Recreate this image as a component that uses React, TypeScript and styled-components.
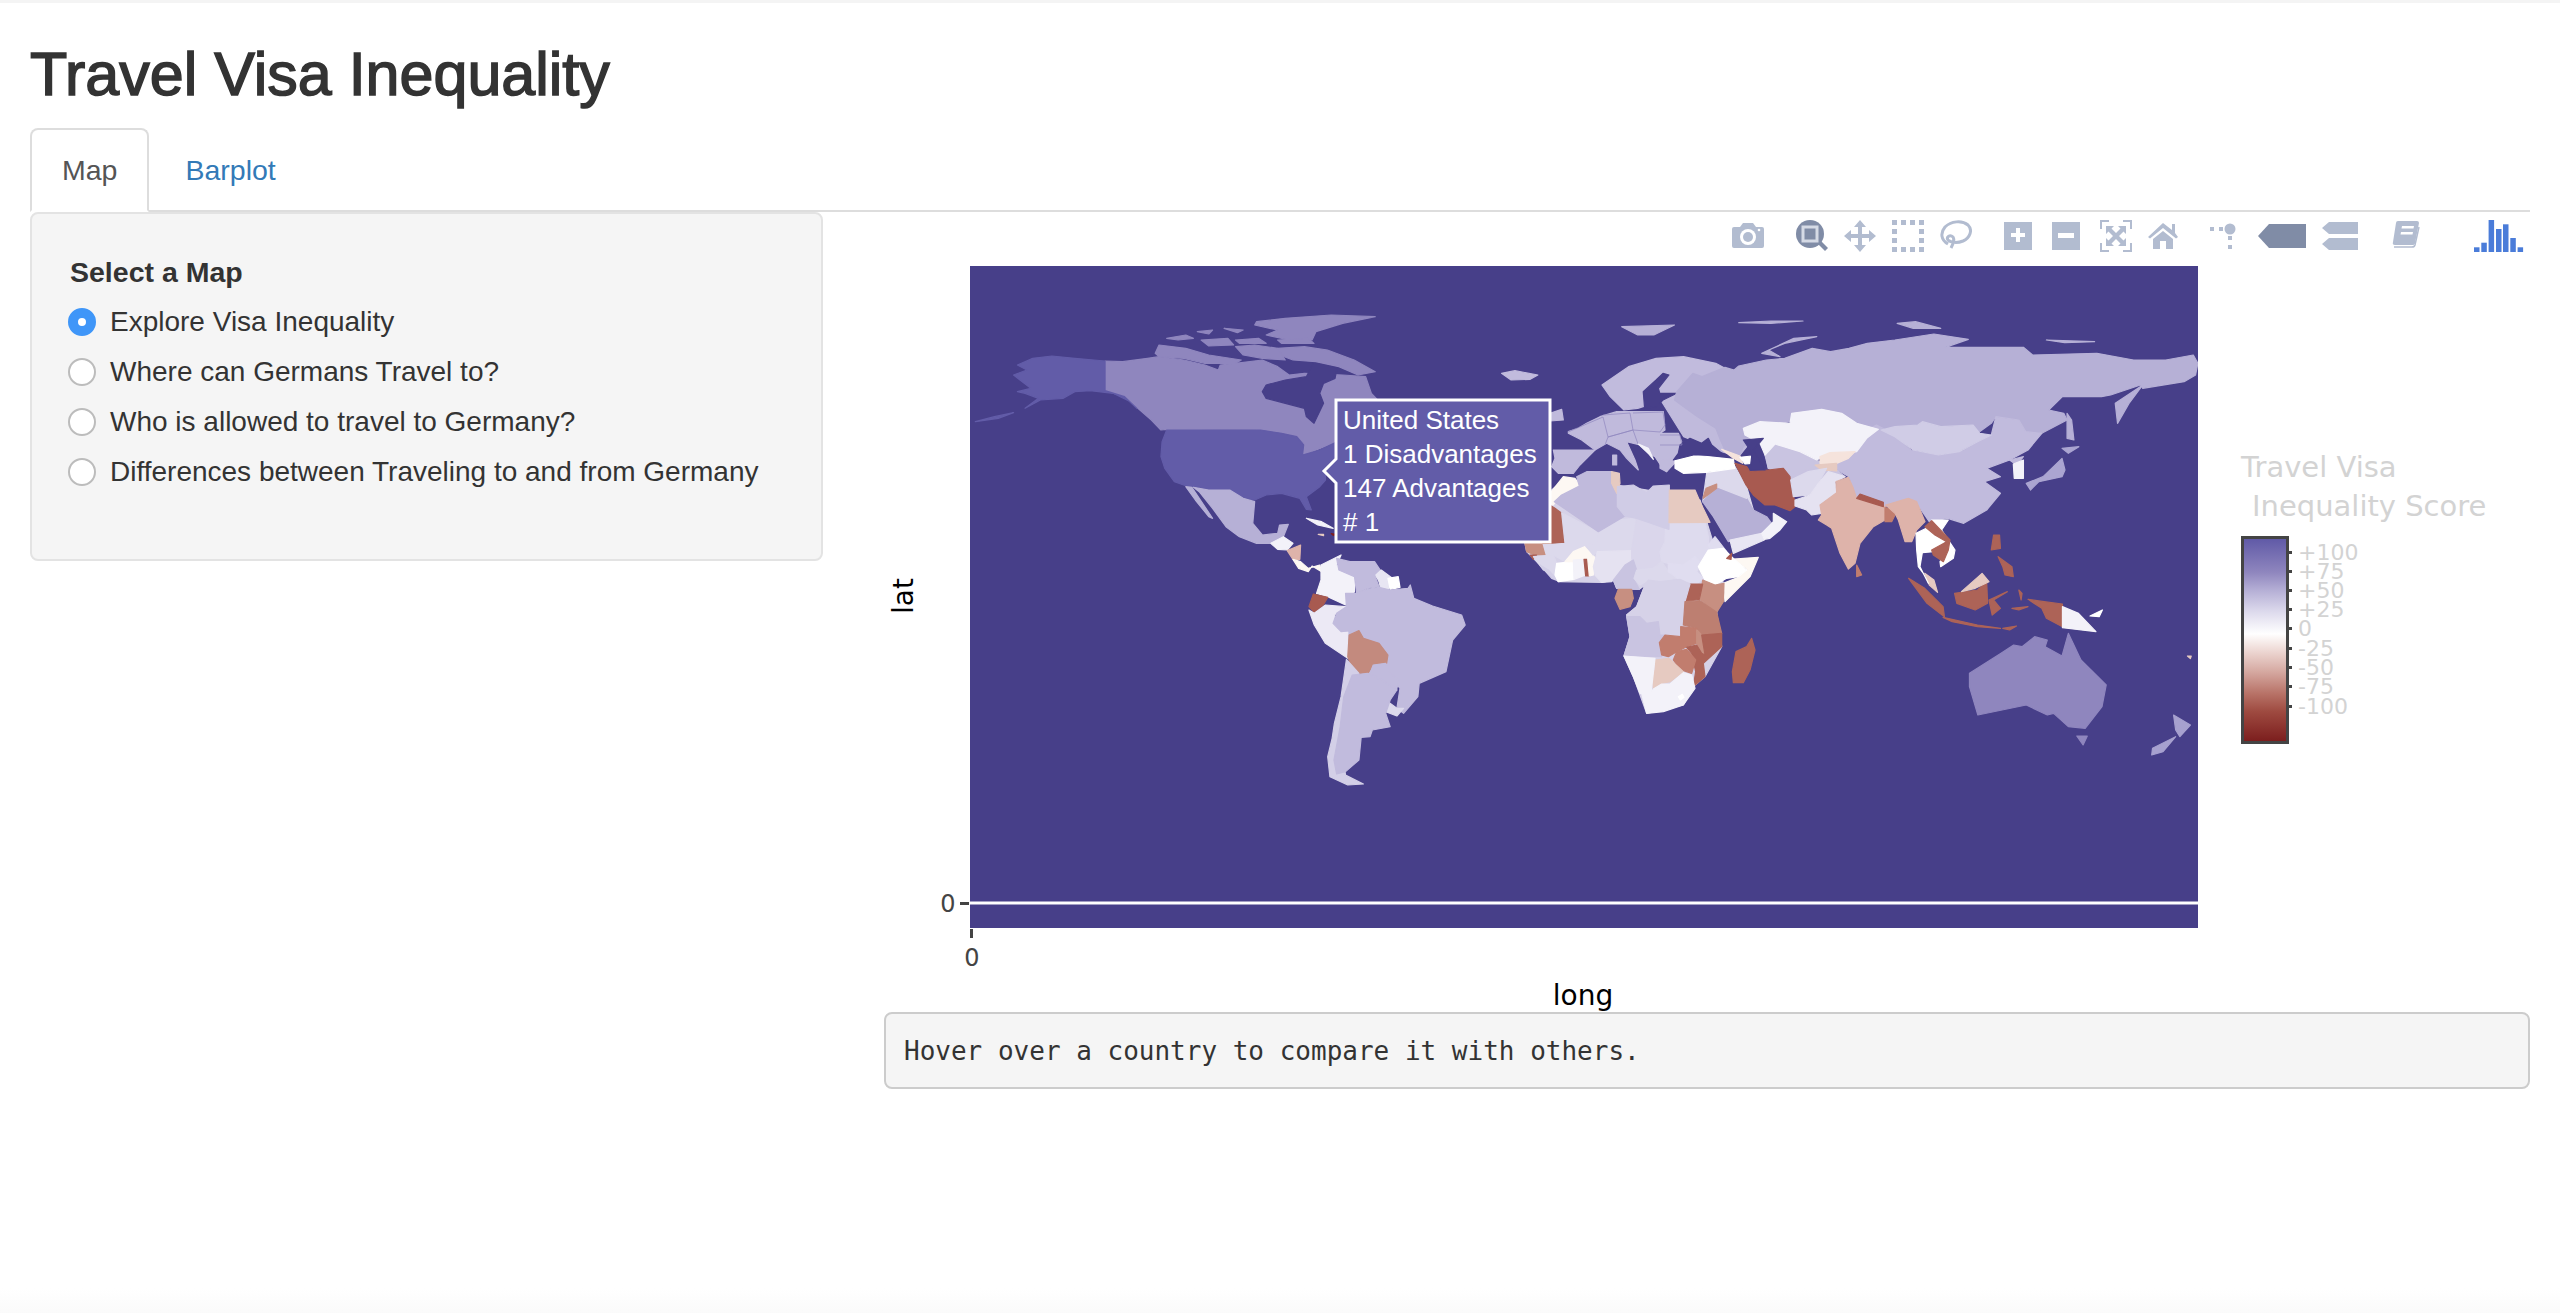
import React from 'react';
import styled, { createGlobalStyle } from 'styled-components';

const GlobalStyle = createGlobalStyle`
  html, body {
    margin: 0;
    padding: 0;
    background: #fff;
  }
  body {
    min-height: 1316px;
    font-family: "Liberation Sans", Arial, sans-serif;
    color: #333;
    overflow: hidden;
  }
`;

const Page = styled.div`
  border-top: 3px solid #f4f4f4;
  height: 1313px;
  box-sizing: border-box;
  padding: 0 30px;
  background: linear-gradient(to bottom, #fff 1285px, #fafafa 1313px);
`;

const Title = styled.h1`
  margin: 0;
  padding-top: 36px;
  height: 89px;
  box-sizing: content-box;
  font-size: 61px;
  line-height: 71px;
  font-weight: 400;
  -webkit-text-stroke: 1.5px #333;
`;

const TabBar = styled.div`
  display: flex;
  height: 84px;
  box-sizing: border-box;
  border-bottom: 2px solid #ddd;
`;

const Tab = styled.div<{ $active?: boolean }>`
  height: 84px;
  box-sizing: border-box;
  padding: 0 30px;
  margin-right: 4px;
  font-size: 28.5px;
  line-height: 80px;
  border: 2px solid ${p => (p.$active ? '#ddd' : 'transparent')};
  border-bottom-color: ${p => (p.$active ? '#fff' : 'transparent')};
  border-radius: 8px 8px 0 0;
  background: ${p => (p.$active ? '#fff' : 'transparent')};
  color: ${p => (p.$active ? '#555' : '#337ab7')};
`;

const Layout = styled.div`
  display: grid;
  grid-template-columns: 793px 1648px;
  column-gap: 59px;
  align-items: start;
`;

const Well = styled.div`
  height: 349px;
  box-sizing: border-box;
  padding: 41px 38px 0;
  background: #f5f5f5;
  border: 2px solid #e3e3e3;
  border-radius: 8px;
`;

const GroupLabel = styled.div`
  font-size: 28.5px;
  font-weight: 700;
  line-height: 34px;
  margin-bottom: 8px;
`;

const RadioRow = styled.div`
  display: flex;
  align-items: center;
  height: 50px;
  font-size: 28px;
  gap: 14px;
  margin-left: -2px;
`;

const RadioDot = styled.span<{ $checked?: boolean }>`
  width: 28px;
  height: 28px;
  box-sizing: border-box;
  border-radius: 50%;
  flex: none;
  background: #fff;
  border: ${p => (p.$checked ? '10px solid #3f96f8' : '2px solid #bcbcbc')};
`;

const MainColumn = styled.div`
  display: flex;
  flex-direction: column;
`;

const PlotFrame = styled.div`
  position: relative;
  height: 800px;
`;

const PlotSvg = styled.svg`
  display: block;
`;

const ModeBar = styled.div`
  position: absolute;
  top: 8px;
  left: 850px;
  display: flex;
  align-items: flex-start;
`;

const ModeIcon = styled.svg<{ $gap: number }>`
  display: block;
  flex: none;
  margin-left: ${p => p.$gap}px;
  fill: #b2bcd0;
`;

const MapShape = styled.polygon`
  stroke-width: 1.2px;
  stroke-linejoin: round;
  vector-effect: non-scaling-stroke;
`;

const SvgLabel = styled.text<{ $size: number; $color: string }>`
  font-family: "DejaVu Sans", Verdana, sans-serif;
  font-size: ${p => p.$size}px;
  fill: ${p => p.$color};
`;

const TipLine = styled.text`
  font-family: "Liberation Sans", Arial, sans-serif;
  font-size: 26px;
  fill: #fff;
`;

const OutputPre = styled.pre`
  margin: 0 0 0 2px;
  height: 77px;
  box-sizing: border-box;
  padding: 0 18px;
  background: #f5f5f5;
  border: 2px solid #ccc;
  border-radius: 8px;
  font-family: "DejaVu Sans Mono", monospace;
  font-size: 26px;
  line-height: 75px;
  color: #333;
`;

const SEA = '#473f89';
const USA = '#625ca8';
const CAN = '#8f86be';
const RUS = '#b6b0d6';
const CHN = '#c1bbdd';
const EUR = '#c0badc';
const AF1 = '#dcd9ec';
const AF2 = '#d3cfe7';
const PALE = '#f3f2f9';
const WH = '#ffffff';
const CREAM = '#fdf8f3';
const BRK = '#a85a50';
const BR2 = '#ad6357';
const BR3 = '#c17d6e';
const BR4 = '#c78f81';
const PK1 = '#deb3aa';
const PK2 = '#e6cac1';
const PK3 = '#f5e3dc';

type Shape = [string, string];

// shapes are traced in crop coordinates, each group maps its crop back on the page
const NORTH_AMERICA: Shape[] = [
  [CAN, '379,303 425,305 490,295 520,290 585,300 640,315 675,330 680,315 720,310 790,300 830,320 860,345 900,340 1000,345 1060,350 1075,400 1100,430 1100,500 985,545 920,575 895,585 898,550 880,530 840,520 785,510 540,508 525,510 500,480 470,450 430,410 379,392'],
  [SEA, '790,395 800,375 850,360 905,350 925,305 960,310 985,325 980,355 950,370 940,400 950,430 925,490 905,470 900,445 850,430 800,415'],
  [CAN, '775,185 850,175 970,165 1085,170 1000,190 930,215 920,240 860,240 800,225 830,210 770,195'],
  [CAN, '830,265 900,260 960,270 1030,300 1085,335 1040,345 990,320 930,305 870,300 835,285'],
  [CAN, '510,280 520,255 590,265 650,285 735,300 720,310 640,310 585,295 520,290'],
  [CAN, '720,260 770,255 830,265 850,300 790,295 740,285'],
  [CAN, '540,235 590,225 610,235 570,240'],
  [CAN, '620,215 660,210 650,222'],
  [CAN, '690,205 740,210 725,218'],
  [CAN, '630,240 700,235 715,255 650,258'],
  [CAN, '720,240 780,235 800,250 730,250'],
  [CAN, '830,240 910,235 925,250 840,250'],
  [USA, '379,303 379,392 430,410 462,445 440,422 400,400 340,392 300,395 270,415 210,420 170,445 205,415 170,400 150,395 185,385 140,345 175,330 150,315 190,295 240,288 300,295'],
  [USA, '40,485 90,470 140,458 100,475'],
  [USA, '540,510 785,510 840,520 880,530 898,555 895,585 940,570 985,545 985,590 975,615 955,630 955,660 940,680 905,710 918,750 905,748 888,715 840,700 800,705 770,720 740,715 705,690 650,690 592,678 560,665 535,625 525,590 528,545'],
  [RUS, '590,680 606,682 660,775 650,770 615,720'],
  [RUS, '610,682 650,690 705,690 740,715 770,725 765,790 790,825 830,820 835,795 858,793 845,830 810,850 775,850 730,830 695,800 660,745 625,695'],
  [PALE, '812,850 845,830 870,850 855,870 830,868'],
  [PK1, '855,872 890,855 888,898 870,898'],
  [CREAM, '870,898 890,905 910,925 940,915 945,935 920,918 910,935 885,925'],
  [PALE, '905,775 945,785 975,805 935,795'],
  [PK2, '936,823 950,823 950,827'],
  ['#7e1e20', '970,821 982,823 975,826'],
  [CHN, '1415,340 1450,332 1510,345 1490,358 1440,360'],
];

const SOUTH_AMERICA: Shape[] = [
  [CHN, '530,330 640,400 665,570 600,530 555,470'],
  [PALE, '495,195 540,165 530,195 570,230 570,275 550,315 510,290 485,280 495,240'],
  [CHN, '530,175 560,185 615,185 630,215 618,235 625,260 600,265 575,280 570,230 535,210'],
  ['#e8e6f3', '618,225 630,210 655,235 645,275 630,272 625,245'],
  [WH, '645,235 668,230 672,262 650,268'],
  [BRK, '478,282 510,292 500,315 480,337 468,320'],
  ['#ece9f5', '468,330 480,340 505,315 550,320 525,345 525,375 555,395 555,475 505,430 480,375'],
  [CHN, '550,280 575,280 600,268 625,262 650,270 690,265 695,255 703,295 745,318 810,345 818,375 790,420 775,515 715,550 712,590 680,640 665,625 672,565 645,520 640,490 645,465 625,430 590,415 580,390 540,395 522,370 530,340 552,320'],
  ['#c38a7e', '580,392 590,415 625,430 645,465 642,490 612,495 600,520 570,522 555,470 558,405'],
  [CHN, '612,495 640,490 650,520 670,540 665,565 640,545 605,520'],
  ['#dcd9ec', '645,605 665,625 680,625 665,648 640,635'],
  ['#d3cfe7', '552,478 580,520 565,590 560,680 545,780 550,825 590,852 555,855 515,830 510,770 520,715 525,670 540,590'],
  [CHN, '565,525 600,520 640,550 665,570 650,600 640,640 650,680 610,690 605,710 585,712 580,780 550,815 530,822 524,780 538,680 546,590'],
];

const AFRICA: Shape[] = [
  ['#d6d2e8', '15,130 60,0 130,-60 200,-60 440,-20 540,0 585,145 610,250 590,337 605,440 555,530 520,560 490,615 380,640 340,530 312,468 330,410 320,345 350,320 375,255 358,268 290,265 280,240 245,247 115,245 55,190 20,155'],
  [BR2, '65,0 105,25 140,50 125,48 135,130 60,130'],
  [AF1, '125,38 232,95 235,130 195,140 160,155 135,185 100,165 70,165 68,135 135,130'],
  [BR4, '15,130 65,130 75,165 45,165 20,155'],
  [BRK, '30,165 50,165 40,178'],
  [AF1, '40,170 100,165 110,190 105,225 85,215 70,210 55,190'],
  [AF2, '60,195 85,210 115,243 95,235'],
  [WH, '110,190 160,185 162,238 115,245 105,225'],
  [CREAM, '135,185 160,155 195,140 218,165 192,180 160,185'],
  [PALE, '160,180 192,178 197,225 162,238'],
  [BRK, '192,178 205,178 207,228 197,228'],
  [CREAM, '203,175 220,167 230,180 220,200 220,225 208,228'],
  [AF1, '235,95 290,60 345,55 350,100 335,150 235,155 220,165 195,135 235,130'],
  ['#e5e2f1', '220,200 232,155 335,152 340,170 320,195 285,235 275,245 245,247 225,225'],
  ['#dad6eb', '350,55 437,90 435,125 420,160 425,190 400,205 350,210 335,175 335,150'],
  ['#dedbee', '437,68 555,68 565,110 565,135 585,145 545,185 525,170 510,190 490,195 445,190 425,185 420,155 435,125'],
  ['#c9c4e1', '340,180 350,210 340,235 358,268 290,265 280,240 315,195'],
  [AF1, '350,210 400,205 425,185 445,215 470,235 420,245 385,240 360,255 342,235'],
  ['#e0ddf0', '445,190 490,195 525,170 545,190 530,215 550,235 530,252 480,240 445,215'],
  ['#e0ddf0', '565,135 585,110 620,155 575,150'],
  [CREAM, '630,178 715,172 690,230 615,305 610,250 655,232 682,208 640,178'],
  [WH, '535,200 565,150 610,145 640,175 680,210 655,230 620,235 585,255 555,240'],
  [BRK, '620,175 635,160 633,178'],
  [BR4, '548,240 585,255 612,250 610,305 590,337 540,298'],
  [BR2, '510,252 548,252 538,298 495,305'],
  [BR4, '295,268 335,268 340,295 330,320 300,328 285,295'],
  ['#d6d2e8', '385,240 420,245 480,238 510,252 495,305 490,340 490,375 482,410 435,405 420,385 415,365 380,370 360,350 320,345 350,320 375,255'],
  ['#bd7f71', '495,305 540,302 590,337 605,400 545,405 530,385 490,375'],
  ['#c9c4e1', '320,350 360,350 380,370 415,365 420,405 435,405 418,428 425,470 312,467 330,410'],
  [BR3, '418,428 435,405 482,410 482,380 530,385 530,430 500,440 470,455 445,470 425,465'],
  [BR4, '530,390 545,405 555,465 545,460 530,430'],
  [BR2, '545,405 605,400 605,440 550,490 555,530 520,560 527,515 515,460 500,442 530,435 545,460 555,465'],
  [BR3, '470,455 500,448 527,480 515,520 480,508 460,480'],
  [PK2, '405,480 447,475 490,515 450,545 425,550 400,565 395,520 405,510'],
  [PALE, '312,468 405,475 393,580 360,580 340,530'],
  [PALE, '365,580 392,580 400,567 425,552 450,552 490,518 515,525 525,565 490,615 430,635 380,640'],
  [WH, '475,590 487,583 492,592 481,600'],
  [BR2, '695,415 705,450 690,510 670,548 640,548 637,515 648,455 680,440'],
];

const EURASIA_FINE: Shape[] = [
  // europe
  [EUR, '145,185 175,175 200,160 240,140 290,125 340,125 430,125 435,180 420,190 475,190 485,215 475,240 480,262 440,305 425,290 405,260 385,250 360,225 320,215 345,270 355,300 320,265 300,240 260,220 225,240 185,210 145,190'],
  [EUR, '100,240 225,240 180,285 160,310 115,310 95,290 105,265'],
  [EUR, '90,130 125,118 130,150 90,153'],
  [PALE, '355,222 385,235 400,268 385,250'],
  [EUR, '420,270 460,265 445,285 440,305 420,295'],
  [EUR, '278,255 290,255 290,285 278,285'],
  // north africa
  [CREAM, '90,370 130,320 165,325 178,348 120,375 100,405 90,403'],
  [EUR, '103,395 125,375 178,348 170,320 200,305 275,305 275,340 290,370 292,410 315,438 235,485'],
  [PK2, '275,305 298,310 300,340 290,370 275,340'],
  ['#d0cce6', '292,350 340,345 380,368 400,348 448,345 447,478 350,445 315,438 292,410'],
  [PK2, '448,360 525,360 540,395 570,457 447,458'],
  // middle east, with a base so no sea shows between neighbours
  [AF1, '560,310 645,290 680,350 700,420 640,400 548,395'],
  ['#c9c4e1', '735,255 765,222 890,270 950,300 975,320 945,335 810,330 745,295'],
  [RUS, '590,355 620,358 680,385 700,420 740,440 755,460 725,490 625,515 580,440 548,395 575,368'],
  ['#e8e6f3', '630,510 725,490 733,510 640,550'],
  [PALE, '725,490 760,455 760,430 800,455 780,480 750,505 733,508'],
  [AF1, '590,350 620,305 655,310 680,370 680,385'],
  [AF1, '560,310 625,305 605,345 570,345'],
  [BR4, '550,380 558,355 590,342 590,355 550,385'],
  [WH, '465,270 520,255 640,268 645,295 560,307 490,310 465,295'],
  [PK3, '605,238 660,258 668,280 640,265'],
  [WH, '660,262 695,258 695,280 675,282'],
  // central asia
  ['#c9c4e1', '738,260 760,220 800,230 840,245 880,270 885,295 860,300 840,320 810,320 790,295 745,295'],
  [PALE, '670,175 720,155 810,160 815,130 905,118 965,130 1010,160 1075,178 1040,205 1010,245 910,260 890,270 840,245 765,222 735,255 720,220 675,195'],
  [PK3, '900,260 930,248 1005,245 985,265 950,280 900,280'],
  [PK2, '885,285 950,280 950,303 905,300'],
  [BRK, '645,280 680,290 690,305 745,300 790,295 810,320 812,350 825,395 835,402 810,422 765,405 735,405 700,375 678,345'],
  [AF1, '812,330 865,305 920,295 895,340 870,375 820,380'],
  ['#e5e2f1', '825,390 870,375 895,340 925,305 975,320 945,335 950,370 900,405 905,430 875,435 860,420 825,408'],
  // south asia
  [PK1, '900,405 950,368 948,335 985,322 1000,355 1010,385 1095,410 1095,450 1060,470 1020,520 1005,580 985,597 960,550 935,475 920,465 895,450 905,435'],
  [BRK, '1020,372 1090,397 1090,410 1010,385'],
  [BR3, '1095,412 1130,425 1115,455 1095,455'],
  [PK1, '1097,405 1165,385 1190,395 1215,455 1190,480 1175,515 1155,515 1135,450 1125,430'],
  [BR3, '1010,585 1025,615 1010,620'],
  // south east asia
  [WH, '1235,450 1285,450 1265,480 1305,540 1300,565 1262,590 1260,575 1285,540 1285,510'],
  [WH, '1188,490 1225,472 1245,497 1280,510 1240,545 1207,548 1200,590 1225,640 1210,610 1195,590 1190,540'],
  [BR2, '1215,470 1235,452 1290,510 1285,540 1270,575 1240,555 1235,540 1280,515 1245,495'],
  // inland seas, on top of the countries
  [SEA, '475,250 480,225 510,205 545,220 565,205 575,225 615,258 575,255 520,255 460,270'],
  [SEA, '670,210 730,205 700,240 735,300 690,300 695,260 690,240'],
];

const NORTH_ASIA: Shape[] = [
  [EUR, '350,420 400,385 600,480 560,520 520,590 470,570 400,530'],
  [CHN, '222,375 280,320 340,295 400,290 470,310 490,325 440,355 420,400 345,425 300,445 270,450 240,410'],
  [SEA, '355,340 368,345 345,385 348,400 385,400 355,420 340,440 315,445 312,395 340,360'],
  [RUS, '385,395 420,340 440,350 490,322 510,330 520,318 580,300 620,295 680,265 720,275 760,265 800,250 860,240 945,222 1020,238 970,262 1100,262 1140,262 1160,285 1300,280 1380,300 1450,300 1510,285 1520,310 1515,345 1490,365 1400,385 1395,375 1330,405 1310,410 1225,410 1195,450 1228,460 1235,480 1180,520 1145,515 1130,480 1080,470 1070,490 1040,520 1030,495 960,500 920,485 910,495 860,515 820,525 795,505 740,480 700,465 630,485 560,505 530,525 535,530 560,540 530,560 520,590 490,570 480,540 470,505 430,470 400,440 380,420'],
  [RUS, '1340,430 1400,375 1370,430 1345,490'],
  [RUS, '1235,460 1245,480 1250,540 1235,535'],
  [RUS, '570,280 640,235 690,230 620,250 585,270 610,290'],
  [RUS, '265,200 380,195 335,225 300,225'],
  [RUS, '520,188 590,183 660,183 590,190'],
  [RUS, '865,190 905,185 960,205 900,205'],
  [RUS, '1190,240 1295,245 1230,248'],
  [CHN, '715,590 770,530 820,495 855,520 895,570 960,585 1010,570 1040,545 1070,525 1080,470 1130,480 1145,515 1180,520 1150,570 1110,600 1060,625 1090,650 1055,665 1090,700 1060,750 1010,790 975,775 935,785 910,735 870,730 835,740 775,720 760,650 735,630'],
  ['#d0cce6', '830,510 860,500 910,495 920,485 960,500 1030,495 1045,520 1070,525 1040,545 1000,575 955,585 900,570 860,530'],
  [CHN, '1110,600 1140,590 1125,615'],
  [PALE, '1118,612 1140,600 1140,655 1120,655'],
  [PK2, '925,940 945,960 953,997 935,975'],
  [BR2, '890,955 925,985 965,1040 968,1070 930,1030'],
  [BR2, '990,1000 1040,990 1060,965 1062,1030 1035,1050 995,1030'],
  [PK2, '1005,995 1050,940 1065,965 1035,985'],
  [BR2, '965,1072 1040,1095 1090,1105 1040,1100 985,1085'],
  [BR2, '1095,1105 1125,1098 1110,1110'],
  [BR2, '1065,1020 1105,995 1075,1020 1090,1045 1072,1065'],
  [BR2, '1130,990 1137,1000 1135,1020'],
  [BR2, '1115,1045 1150,1040 1130,1050'],
  [BR2, '1075,825 1088,825 1090,865 1070,870'],
  [BR2, '1085,890 1115,920 1118,950 1100,945 1095,920'],
  [BR2, '1150,1018 1185,1025 1225,1032 1225,1100 1190,1075 1180,1045'],
  [PALE, '1225,1040 1260,1060 1298,1115 1225,1103'],
  [WH, '1285,1068 1312,1050 1305,1070'],
];

const OCEANIA: Shape[] = [
  ['#aba5d1', '300,190 340,170 385,115 392,150 385,170 330,185 310,210'],
  ['#aba5d1', '385,85 425,80 400,100'],
  [CAN, '165,760 240,700 270,675 290,680 320,650 350,660 345,680 385,708 400,640 430,720 490,795 480,860 440,925 400,920 365,880 350,885 300,855 185,885 165,800'],
  [CAN, '420,948 445,948 435,975'],
  ['#a7a1cf', '650,885 690,915 665,950 655,930'],
  ['#a7a1cf', '655,950 625,995 598,1005 600,985'],
  [PK2, '683,708 692,708 690,716'],
];

const REGIONS = [
  { shapes: NORTH_ASIA, x: 1500, y: 260, sx: 1 / 2.178, sy: 1 / 3 },
  { shapes: NORTH_AMERICA, x: 960, y: 260, sx: 1 / 2.613, sy: 1 / 3 },
  { shapes: SOUTH_AMERICA, x: 1100, y: 500, sx: 1 / 2.24, sy: 1 / 3 },
  { shapes: AFRICA, x: 1520, y: 500, sx: 1 / 3, sy: 1 / 3 },
  { shapes: EURASIA_FINE, x: 1520, y: 370, sx: 1 / 3, sy: 1 / 3 },
  { shapes: OCEANIA, x: 1900, y: 420, sx: 1 / 2.376, sy: 1 / 3 },
];

// thin purple lines between the european neighbours
const BORDER_LINES = [
  '1568,432 1603,417 1608,437 1605,445',
  '1603,415 1630,413 1633,430 1608,437',
  '1633,413 1663,412 1665,425 1660,432 1633,430',
  '1660,435 1680,435 1682,445 1660,445',
  '1608,437 1633,430 1638,444',
];

const COLORBAR_TICKS = [
  ['+100', 552], ['+75', 571], ['+50', 590], ['+25', 609], ['0', 628],
  ['-25', 648], ['-50', 667], ['-75', 686], ['-100', 706],
] as const;

const OPTIONS = [
  'Explore Visa Inequality',
  'Where can Germans Travel to?',
  'Who is allowed to travel to Germany?',
  'Differences between Traveling to and from Germany',
];

const SELECT_DOTS = [0, 9, 18, 27];

const ModeBarIcons = () => (
  <ModeBar>
    <ModeIcon $gap={0} width="32" height="32" viewBox="0 0 32 32">
      <path d="M2 7h6l3-4h10l3 4h6q2 0 2 2v17q0 2-2 2H2q-2 0-2-2V9q0-2 2-2z" />
      <circle cx="16" cy="17" r="8" fill="#fff" />
      <circle cx="16" cy="17" r="5" />
      <circle cx="27" cy="10" r="1.3" fill="#fff" />
    </ModeIcon>
    <ModeIcon $gap={32} width="32" height="32" viewBox="0 0 32 32" style={{ fill: '#808ca6' }}>
      <circle cx="14" cy="14" r="14" />
      <path d="M22 24l3-3 7 7-3 3z" />
      <rect x="7" y="7" width="14" height="14" fill="none" stroke="#d5dae5" strokeWidth="3" />
    </ModeIcon>
    <ModeIcon $gap={16} width="32" height="32" viewBox="0 0 32 32">
      <path d="M16 0l6 7h-4v7h7v-4l7 6-7 6v-4h-7v7h4l-6 7-6-7h4v-7H7v4l-7-6 7-6v4h7V7h-4z" />
    </ModeIcon>
    <ModeIcon $gap={16} width="32" height="32" viewBox="0 0 32 32">
      {SELECT_DOTS.map(d => (
        <React.Fragment key={d}>
          <rect x={d} y="0" width="5" height="5" />
          <rect x={d} y="27" width="5" height="5" />
          <rect x="0" y={d} width="5" height="5" />
          <rect x="27" y={d} width="5" height="5" />
        </React.Fragment>
      ))}
    </ModeIcon>
    <ModeIcon $gap={16} width="32" height="32" viewBox="0 0 32 32">
      <path
        d="M8 24C1 20 0 13 5 7c6-6 17-7 23-2 5 5 2 13-5 16-5 2-12 2-15-1-2-3 2-6 5-3 2 3 0 7-2 11"
        fill="none"
        stroke="#b2bcd0"
        strokeWidth="3"
      />
    </ModeIcon>
    <ModeIcon $gap={32} width="28" height="30" viewBox="0 0 28 30">
      <rect y="2" width="28" height="28" />
      <path d="M12 8h4v5h5v4h-5v5h-4v-5H7v-4h5z" fill="#fff" />
    </ModeIcon>
    <ModeIcon $gap={20} width="28" height="30" viewBox="0 0 28 30">
      <rect y="2" width="28" height="28" />
      <rect x="6" y="13" width="16" height="5" fill="#fff" />
    </ModeIcon>
    <ModeIcon $gap={20} width="32" height="32" viewBox="0 0 32 32">
      <path d="M0 0h9v2H2v7H0zM23 0h9v9h-2V2h-7zM0 23h2v7h7v2H0zM30 23h2v9h-9v-2h7z" />
      <path d="M6 6h8l-2.500 2.500L16 13l4.500-4.500L18 6h8v8l-2.500-2.500L19 16l4.500 4.500L26 18v8h-8l2.500-2.500L16 19l-4.500 4.500L14 26H6v-8l2.500 2.500L13 16l-4.500-4.500L6 14z" />
    </ModeIcon>
    <ModeIcon $gap={16} width="30" height="30" viewBox="0 0 30 30">
      <path d="M15 3L24 10V4h3v9l3 4-2 1.500L15 8 2 18.500 0 17z" />
      <path d="M15 11l10 8v10h-7v-8h-6v8H5V19z" />
    </ModeIcon>
    <ModeIcon $gap={32} width="26" height="30" viewBox="0 0 26 30">
      <rect x="0" y="7" width="4" height="4" />
      <rect x="9" y="7" width="4" height="4" />
      <circle cx="20" cy="9" r="5.500" />
      <rect x="18" y="16" width="4" height="4" />
      <rect x="18" y="25" width="4" height="4" />
    </ModeIcon>
    <ModeIcon $gap={22} width="48" height="30" viewBox="0 0 48 30" style={{ fill: '#808ca6' }}>
      <path d="M0 16L11 4h37v24H11z" />
    </ModeIcon>
    <ModeIcon $gap={16} width="36" height="32" viewBox="0 0 36 32">
      <path d="M0 8l7-6h29v12H7zM0 24l7-6h29v12H7z" />
    </ModeIcon>
    <ModeIcon $gap={34} width="28" height="30" viewBox="0 0 28 30">
      <path d="M6 1h19q2 0 2 2l-4 20q0 2-3 2H3q-3 0-2-3L4 3q0-2 2-2z" />
      <path d="M10 6h12l-.5 2.500h-12zM9 12h12l-.5 2.500h-12z" fill="#fff" />
      <path d="M27 7l-4 18q-.5 2-3 2H2" fill="none" stroke="#b2bcd0" strokeWidth="1.500" />
    </ModeIcon>
    <ModeIcon $gap={54} width="50" height="32" viewBox="0 0 50 32" style={{ fill: '#4a7cd9' }}>
      <rect x="0" y="27.300" width="5.500" height="4.700" />
      <rect x="7.300" y="22.700" width="5.500" height="9.300" />
      <rect x="14.600" y="0" width="5.500" height="32" />
      <rect x="22" y="9" width="5.500" height="23" />
      <rect x="29" y="4.300" width="5.500" height="27.700" />
      <rect x="36.300" y="18" width="5.500" height="14" />
      <rect x="43.600" y="27.300" width="5.500" height="4.700" />
    </ModeIcon>
  </ModeBar>
);

const VisaPlot = () => (
  <PlotSvg width="1648" height="800" viewBox="882 212 1648 800">
    <defs>
      <clipPath id="plot-area">
        <rect x="970" y="266" width="1228" height="662" />
      </clipPath>
      <linearGradient id="score-scale" x1="0" y1="0" x2="0" y2="1">
        <stop offset="0" stopColor="#5e58a6" />
        <stop offset="0.17" stopColor="#8f86be" />
        <stop offset="0.26" stopColor="#b6b0d6" />
        <stop offset="0.36" stopColor="#dcd9ec" />
        <stop offset="0.47" stopColor="#ffffff" />
        <stop offset="0.55" stopColor="#eed9d5" />
        <stop offset="0.66" stopColor="#d4a69e" />
        <stop offset="0.76" stopColor="#b87368" />
        <stop offset="0.85" stopColor="#9e4a40" />
        <stop offset="1" stopColor="#7a1c1c" />
      </linearGradient>
    </defs>

    <rect x="970" y="266" width="1228" height="662" fill={SEA} />
    <g clipPath="url(#plot-area)">
      {REGIONS.map(r => (
        <g key={`${r.x}-${r.y}`} transform={`translate(${r.x} ${r.y}) scale(${r.sx} ${r.sy})`}>
          {r.shapes.map(([fill, points], i) => (
            <MapShape key={i} fill={fill} stroke={fill} points={points} />
          ))}
        </g>
      ))}
      {BORDER_LINES.map(points => (
        <polyline key={points} points={points} fill="none" stroke="#8f86be" strokeWidth="0.7" />
      ))}
    </g>
    <rect x="970" y="901.500" width="1228" height="3" fill="#fff" />

    <rect x="960" y="902" width="9" height="3" fill="#444" />
    <rect x="970" y="929" width="3" height="9" fill="#444" />
    <SvgLabel $size={24} $color="#444" x="948" y="912" textAnchor="middle">0</SvgLabel>
    <SvgLabel $size={24} $color="#444" x="972" y="966" textAnchor="middle">0</SvgLabel>
    <SvgLabel $size={28} $color="#000" x="1583" y="1005" textAnchor="middle">long</SvgLabel>
    <SvgLabel $size={28} $color="#000" textAnchor="middle" transform="translate(913 596) rotate(-90)">lat</SvgLabel>

    <SvgLabel $size={29} $color="#d3d3d3" x="2241" y="477">Travel Visa</SvgLabel>
    <SvgLabel $size={29} $color="#d3d3d3" x="2252" y="516">Inequality Score</SvgLabel>
    <rect x="2242.500" y="537.500" width="45" height="205" fill="url(#score-scale)" stroke="#444" strokeWidth="3" />
    {COLORBAR_TICKS.map(([label, y]) => (
      <React.Fragment key={label}>
        <rect x="2288" y={y - 1} width="4" height="3" fill="#444" />
        <SvgLabel $size={22} $color="#d3d3d3" x="2298" y={y + 8}>{label}</SvgLabel>
      </React.Fragment>
    ))}

    <path
      d="M1336 400H1550V542H1336V483L1324 471L1336 459Z"
      fill={USA}
      stroke="#fff"
      strokeWidth="3"
    />
    <TipLine x="1343" y="429">United States</TipLine>
    <TipLine x="1343" y="463">1 Disadvantages</TipLine>
    <TipLine x="1343" y="497">147 Advantages</TipLine>
    <TipLine x="1343" y="531"># 1</TipLine>
  </PlotSvg>
);

export default function App() {
  return (
    <Page>
      <GlobalStyle />
      <Title>Travel Visa Inequality</Title>
      <TabBar>
        <Tab $active>Map</Tab>
        <Tab>Barplot</Tab>
      </TabBar>
      <Layout>
        <Well>
          <GroupLabel>Select a Map</GroupLabel>
          {OPTIONS.map((option, i) => (
            <RadioRow key={option}>
              <RadioDot $checked={i === 0} />
              {option}
            </RadioRow>
          ))}
        </Well>
        <MainColumn>
          <PlotFrame>
            <VisaPlot />
            <ModeBarIcons />
          </PlotFrame>
          <OutputPre>Hover over a country to compare it with others.</OutputPre>
        </MainColumn>
      </Layout>
    </Page>
  );
}
